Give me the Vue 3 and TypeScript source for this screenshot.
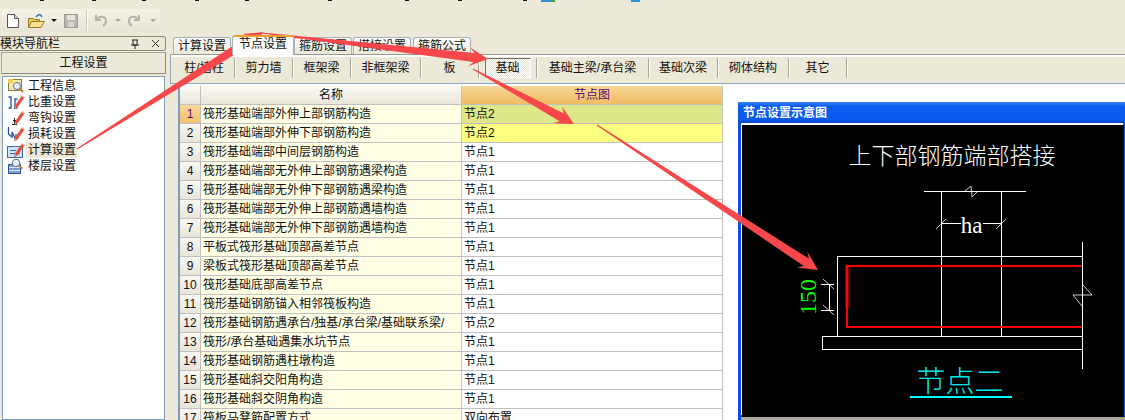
<script setup lang="ts">
type Row = { name: string; node: string };

const rows: Row[] = [
  { name: "筏形基础端部外伸上部钢筋构造", node: "节点2" },
  { name: "筏形基础端部外伸下部钢筋构造", node: "节点2" },
  { name: "筏形基础端部中间层钢筋构造", node: "节点1" },
  { name: "筏形基础端部无外伸上部钢筋遇梁构造", node: "节点1" },
  { name: "筏形基础端部无外伸下部钢筋遇梁构造", node: "节点1" },
  { name: "筏形基础端部无外伸上部钢筋遇墙构造", node: "节点1" },
  { name: "筏形基础端部无外伸下部钢筋遇墙构造", node: "节点1" },
  { name: "平板式筏形基础顶部高差节点", node: "节点1" },
  { name: "梁板式筏形基础顶部高差节点", node: "节点1" },
  { name: "筏形基础底部高差节点", node: "节点1" },
  { name: "筏形基础钢筋锚入相邻筏板构造", node: "节点1" },
  { name: "筏形基础钢筋遇承台/独基/承台梁/基础联系梁/", node: "节点2" },
  { name: "筏形/承台基础遇集水坑节点", node: "节点1" },
  { name: "筏形基础钢筋遇柱墩构造", node: "节点1" },
  { name: "筏形基础斜交阳角构造", node: "节点1" },
  { name: "筏形基础斜交阴角构造", node: "节点1" },
  { name: "筏板马凳筋配置方式", node: "双向布置" },
];

const navItems = ["工程信息", "比重设置", "弯钩设置", "损耗设置", "计算设置", "楼层设置"];
const tabs = ["计算设置", "节点设置", "箍筋设置", "搭接设置", "箍筋公式"];
const subTabs = [
  { label: "柱/墙柱", w: 61 },
  { label: "剪力墙", w: 58 },
  { label: "框架梁", w: 58 },
  { label: "非框架梁", w: 70 },
  { label: "板", w: 58 },
  { label: "基础", w: 58 },
  { label: "基础主梁/承台梁", w: 112 },
  { label: "基础次梁", w: 69 },
  { label: "砌体结构", w: 71 },
  { label: "其它", w: 58 },
];

const topMarks = [40, 92, 142, 195, 245, 328, 405, 458, 523];

// tapered arrow: thin tail, wide neck, barbed head
function arrow(x1: number, y1: number, x2: number, y2: number, tail = 0.5, neck = 4.5, wing = 9.5, len = 17) {
  const d = Math.hypot(x2 - x1, y2 - y1);
  const ux = (x2 - x1) / d;
  const uy = (y2 - y1) / d;
  const nx = -uy;
  const ny = ux;
  const pt = (along: number, side: number) =>
    `${(x1 + ux * along + nx * side).toFixed(1)},${(y1 + uy * along + ny * side).toFixed(1)}`;
  return [
    pt(0, tail),
    pt(d - len + 3, neck),
    pt(d - len - 2, wing),
    pt(d, 0),
    pt(d - len - 2, -wing),
    pt(d - len + 3, -neck),
    pt(0, -tail),
  ].join(" ");
}

const arrows = [
  arrow(77, 149, 263, 32),
  arrow(262, 33, 488, 59),
  arrow(473, 69, 574, 124),
  arrow(597, 125, 818, 270),
];
</script>

<template>
  <div class="page">
    <svg class="top-strip" width="1125" height="9">
      <rect v-for="m in topMarks" :key="m" :x="m" y="0" width="4" height="1" fill="#111" />
      <rect x="541" y="0" width="10" height="2" fill="#3a8ad8" />
      <rect x="551" y="0" width="4" height="2" fill="#3aa83a" />
      <rect x="631" y="0" width="9" height="2" fill="#2e8fe0" />
    </svg>

    <div class="toolbar">
      <svg class="tb-ico doc" width="12" height="14" viewBox="0 0 12 14">
        <path d="M.5 .5h7l4 4v9H.5z" fill="#fff" stroke="#555" />
        <path d="M7.500 .5v4h4" fill="#ddd" stroke="#555" />
      </svg>
      <svg class="tb-ico folder" width="17" height="14" viewBox="0 0 17 14">
        <path d="M.5 4.500h5l1 1h5v8H.5z" fill="#e8c860" stroke="#9a7a20" />
        <path d="M.5 13.500l3-6h13l-3.500 6z" fill="#f8e090" stroke="#9a7a20" />
        <path d="M8 3c2-3 5-3 6 0" fill="none" stroke="#3a6ab0" stroke-width="1.500" />
      </svg>
      <i class="caret dark"></i>
      <svg class="tb-ico save" width="14" height="14" viewBox="0 0 14 14">
        <rect x=".5" y=".5" width="13" height="13" fill="#b8b8b0" stroke="#9c9c94" />
        <rect x="3" y="1" width="8" height="5" fill="#e4e4dc" />
        <rect x="4" y="8" width="6" height="5" fill="#d8d8d0" />
      </svg>
      <span class="tb-sep"></span>
      <svg class="tb-ico undo" width="13" height="13" viewBox="0 0 13 13">
        <path d="M2 1v5h5M2.500 6C5 1 12 2 12 7c0 2-1 4-3 5" fill="none" stroke="#b4b4aa" stroke-width="2" />
      </svg>
      <i class="caret after-undo"></i>
      <svg class="tb-ico redo" width="13" height="13" viewBox="0 0 13 13">
        <path d="M11 1v5H6M10.500 6C8 1 1 2 1 7c0 2 1 4 3 5" fill="none" stroke="#b4b4aa" stroke-width="2" />
      </svg>
      <i class="caret after-redo"></i>
    </div>

    <div class="main">
      <aside class="nav">
        <div class="nav-head">
          <span>模块导航栏</span>
          <svg width="12" height="10" viewBox="0 0 12 10" class="pin">
            <path d="M3 1h6M4 1v5h4V1M2 6h8M6 6v4" fill="none" stroke="#222" />
          </svg>
          <svg width="9" height="9" viewBox="0 0 9 9" class="close">
            <path d="M1 1l7 7M8 1L1 8" stroke="#333" />
          </svg>
        </div>
        <div class="nav-title">工程设置</div>
        <ul class="nav-list">
          <li v-for="(item, i) in navItems" :key="item" class="nav-item">
            <svg class="nav-ico" width="18" height="16" viewBox="0 0 18 16">
              <template v-if="i === 0">
                <rect x="1.500" y="1.500" width="13" height="11" fill="#f4e6b0" stroke="#8a7a48" />
                <path d="M1 1h5v4H1z" fill="#f2d040" />
                <circle cx="10" cy="8" r="3.500" fill="#e6f0fa" stroke="#5a6f8a" />
                <path d="M12.500 10.500l3.500 3.500" stroke="#c08030" stroke-width="2" />
              </template>
              <template v-else-if="i === 1">
                <path d="M1.500 3H4v11H1.500M10.500 5H8v9h2.500" fill="none" stroke="#2a4f96" stroke-width="1.300" />
              </template>
              <template v-else-if="i === 2">
                <path d="M7.500 8v6M5 14.500h5M6 10.500h3" fill="none" stroke="#222" />
              </template>
              <template v-else-if="i === 3">
                <path d="M1.500 1v7l3.500 3V6l4 8V8" fill="none" stroke="#2a4f96" stroke-width="1.300" />
              </template>
              <template v-else-if="i === 4">
                <rect x=".5" y="4.500" width="15" height="11" fill="#cfe2f6" stroke="#3a6ab0" />
                <path d="M3 8.500h6M3 11.500h10" stroke="#3a6ab0" />
              </template>
              <template v-else>
                <path d="M1.500 6.500h12v9h-12z" fill="#7aa0d8" stroke="#2a4f96" />
                <path d="M2 9.500h11M2 12.500h11" stroke="#dfeaf6" />
                <circle cx="9" cy="5" r="3.800" fill="#e8eef6" stroke="#5a6f8a" />
                <path d="M12 8l3.500 2.500" stroke="#c08030" stroke-width="2" />
              </template>
              <g v-if="i >= 1 && i <= 4">
                <path d="M8 11.500l7-10 2.500 2-7 10-3 1z" fill="#e8503c" />
                <path d="M15 1.500l2.500 2" stroke="#f6c4a8" stroke-width="1.500" />
                <path d="M8 12.500l-.5 2 2-.5" fill="#fff" stroke="#555" stroke-width=".6" />
              </g>
            </svg>
            <span class="nav-label" :class="{ selected: i === 4 }">{{ item }}</span>
          </li>
        </ul>
      </aside>

      <section class="content">
        <div class="tabs">
          <div v-for="(t, i) in tabs" :key="t" class="tab" :class="{ active: i === 1 }">{{ t }}</div>
        </div>
        <div class="subtabs">
          <div
            v-for="(s, i) in subTabs"
            :key="s.label"
            class="subtab"
            :style="{ width: s.w + 'px' }"
          >
            <span :class="{ pressed: i === 5 }">{{ s.label }}</span>
          </div>
        </div>
        <div class="grid-wrap">
          <div class="grid">
            <div class="cell num head"></div>
            <div class="cell name-head head">名称</div>
            <div class="cell node-head">节点图</div>
            <template v-for="(r, i) in rows" :key="i">
              <div class="cell num" :class="{ current: i === 0 }">{{ i + 1 }}</div>
              <div class="cell name">{{ r.name }}</div>
              <div class="cell node" :class="{ first: i === 0, second: i === 1 }">{{ r.node }}</div>
            </template>
          </div>
        </div>
      </section>
    </div>

    <div class="win">
      <div class="win-title">节点设置示意图</div>
      <svg class="drawing" width="382" height="292" viewBox="743 125 382 292">
        <text x="953" y="164" text-anchor="middle" class="cad-title">上下部钢筋端部搭接</text>
        <g fill="none" stroke="#fff" shape-rendering="crispEdges">
          <path d="M925 191.500h102" />
          <path d="M942.500 191V336M1002.500 191V336" />
          <path d="M942 223.500h20M984 223.500h18" />
          <path d="M838.500 336V256.500H1083" />
          <path d="M1083.500 242V369" />
          <path d="M1083 336.500H823.500V349.500H1083" />
          <path d="M838 336.500h245" />
          <path d="M830.500 284V310M822 284.500h13M822 310.500h13" />
        </g>
        <g fill="none" stroke="#fff" stroke-width=".8">
          <path d="M966 191l6-5 1 11 5-5" />
          <path d="M937 229l10-10M997 229l10-10" />
          <path d="M824 279l11 10M824 305l11 10" />
          <path d="M1084 285l9 10h-19l9 11" />
        </g>
        <text x="972.500" y="233" text-anchor="middle" class="cad-ha">ha</text>
        <path d="M1083 266H848V327H1083" fill="none" stroke="#f00" stroke-width="2" />
        <path d="M848 266v42" stroke="#f00" stroke-width="3" />
        <text transform="translate(817 297) rotate(-90)" text-anchor="middle" class="cad-dim">150</text>
        <text x="961" y="392" text-anchor="middle" class="cad-node">节点二</text>
        <path d="M911 397h102" stroke="#0ff" stroke-width="2" />
      </svg>
      <div class="win-bottom"></div>
    </div>

    <svg class="arrows" width="1125" height="420">
      <polygon v-for="(p, i) in arrows" :key="i" :points="p" fill="#f8474a" />
    </svg>
  </div>
</template>

<style>
html,
body {
  margin: 0;
  background: #ece9d8;
}
</style>

<style scoped>
.page {
  position: relative;
  width: 1125px;
  height: 420px;
  overflow: hidden;
  background: #ece9d8;
  font: 12px/16px "Liberation Sans", "Noto Sans CJK SC", sans-serif;
  color: #111;
}

.top-strip {
  display: block;
}

.toolbar {
  display: flex;
  align-items: center;
  width: 153px;
  height: 23px;
  margin: 0 0 4px 1px;
  padding-left: 6px;
  background: linear-gradient(#f4f2e8, #e8e5d6);
  border-radius: 3px;
}

.tb-ico {
  display: block;
  flex: none;
}

.folder {
  margin-left: 9px;
}

.caret {
  display: block;
  border: 3px solid transparent;
  border-top: 3px solid #a8a8a0;
  border-bottom: 0;
}

.caret.dark {
  margin-left: 6px;
  border-top-color: #111;
}

.save {
  margin-left: 7px;
}

.tb-sep {
  width: 1px;
  height: 21px;
  margin: 0 7px 0 8px;
  background: #c8c5b6;
  box-shadow: 1px 0 0 #fff;
}

.after-undo {
  margin-left: 8px;
}

.redo {
  margin-left: 7px;
}

.after-redo {
  margin-left: 9px;
}

.main {
  display: flex;
  height: 384px;
}

.nav {
  flex: none;
  width: 166px;
  display: flex;
  flex-direction: column;
}

.nav-head {
  display: flex;
  align-items: center;
  height: 13px;
  padding-right: 4px;
  border: 1px solid #8c8a7c;
  border-left: 0;
  border-radius: 0 3px 3px 0;
}

.nav-head span {
  flex: 1;
}

.pin {
  margin-right: 10px;
}

.close {
  margin-right: 1px;
}

.nav-title {
  height: 20px;
  margin: 1px 0 2px 1px;
  border: 1px solid #aca899;
  border-right-color: #8c8a7c;
  border-bottom-color: #8c8a7c;
  text-align: center;
  line-height: 20px;
  background: #ece9d8;
}

.nav-list {
  flex: 1;
  list-style: none;
  margin: 0 1px 0 2px;
  padding: 1px 0 0 4px;
  background: #fff;
  border: 1px solid #7f9db9;
}

.nav-item {
  display: flex;
  align-items: center;
  height: 16px;
}

.nav-ico {
  flex: none;
  width: 18px;
}

.nav-label {
  margin-left: 1px;
  padding: 0 1px 0 2px;
}

.nav-label.selected {
  background: #ece9d8;
}

.content {
  flex: 1;
  margin-left: 4px;
  display: flex;
  flex-direction: column;
  min-width: 0;
}

.tabs {
  display: flex;
  align-items: flex-end;
  height: 18px;
  padding-left: 3px;
}

.tab {
  height: 15px;
  padding: 1px 4px 0;
  margin-right: 1px;
  border: 1px solid #a8b0b8;
  border-bottom: 0;
  border-radius: 3px 3px 0 0;
  background: linear-gradient(#fff, #ece9d8);
  line-height: 15px;
  white-space: nowrap;
}

.tab:last-child {
  margin-left: 1px;
}

.tab.active {
  height: 18px;
  padding: 0 6px;
  margin: 0 0 -1px 0;
  background: #fcfcfa;
  border-top: 2px solid #f0a030;
  position: relative;
  z-index: 1;
}

.subtabs {
  display: flex;
  height: 25px;
  padding: 3px 0 0 3px;
  border-top: 1px solid #9a9a90;
  box-shadow: inset 0 2px 0 #fff;
  border-bottom: 1px solid #8fa8c8;
  background: #ece9d8;
  border-left: 1px solid #9ab;
}

.subtab {
  flex: none;
  height: 20px;
  display: flex;
  align-items: center;
  justify-content: center;
  box-sizing: border-box;
  border-right: 1px solid #aca899;
  box-shadow: 1px 0 0 #fff;
}

.subtab .pressed {
  width: 46px;
  height: 20px;
  line-height: 19px;
  text-align: center;
  border: 1px solid;
  border-color: #716f64 #fff #fff #716f64;
  box-sizing: border-box;
  background: repeating-conic-gradient(#fff 0 25%, #e4e1d0 0 50%) 0 0 / 2px 2px;
}

.grid-wrap {
  flex: 1;
  margin-left: 8px;
  padding-top: 2px;
  background: #fff;
  border-left: 2px solid #7f9db9;
  overflow: hidden;
}

.grid {
  display: grid;
  grid-template-columns: 21px 261px 261px;
  grid-auto-rows: 19px;
  width: 543px;
}

.cell {
  box-sizing: border-box;
  border-right: 1px solid #c0c0c0;
  border-bottom: 1px solid #c0c0c0;
  line-height: 18px;
  padding-left: 2px;
  white-space: nowrap;
  overflow: hidden;
}

.num {
  padding: 0;
  text-align: center;
  background: linear-gradient(#f8f7f2, #e8e5d8);
}

.num.current {
  background: linear-gradient(#fbd79a, #f4c070);
  color: #5a0a7a;
}

.head {
  background: linear-gradient(#fbfaf6, #e8e5d8);
}

.name-head {
  padding: 0;
  text-align: center;
}

.node-head {
  padding: 0;
  text-align: center;
  color: #5a0a7a;
  background: linear-gradient(#f8d898, #efbc62);
}

.name {
  background: #ffffe6;
}

.node {
  background: #fff;
}

.node.first {
  background: #dfe888;
}

.node.second {
  background: #ffff80;
}

.win {
  position: absolute;
  left: 737px;
  top: 102px;
  width: 388px;
  height: 318px;
  background: #0a52e6;
  box-sizing: border-box;
  padding-left: 5px;
  box-shadow: inset 1px 0 0 #fff;
}

.win-title {
  height: 21px;
  margin-left: -4px;
  padding-left: 5px;
  box-sizing: border-box;
  background: linear-gradient(#3d86f4, #0a5cf0 20%, #0a5cf0 80%, #0446d0);
  color: #fff;
  font-weight: 700;
  line-height: 22px;
}

.drawing {
  display: block;
  margin-top: 2px;
  background: #000;
  box-shadow: -1px -2px 0 #fff;
}

.win-bottom {
  height: 3px;
  margin-left: -1px;
  background: #aca899;
}

.cad-title {
  font-size: 23px;
  font-weight: 300;
  fill: #fff;
  font-family: "Noto Sans CJK SC", sans-serif;
}

.cad-ha {
  font-size: 23px;
  fill: #fff;
  font-family: "Liberation Serif", serif;
}

.cad-dim {
  font-size: 24px;
  fill: #00ff00;
  font-family: "Liberation Serif", serif;
}

.cad-node {
  font-size: 29px;
  font-weight: 300;
  fill: #00e8e8;
  font-family: "Noto Sans CJK SC", sans-serif;
}

.arrows {
  position: absolute;
  left: 0;
  top: 0;
  pointer-events: none;
}
</style>
